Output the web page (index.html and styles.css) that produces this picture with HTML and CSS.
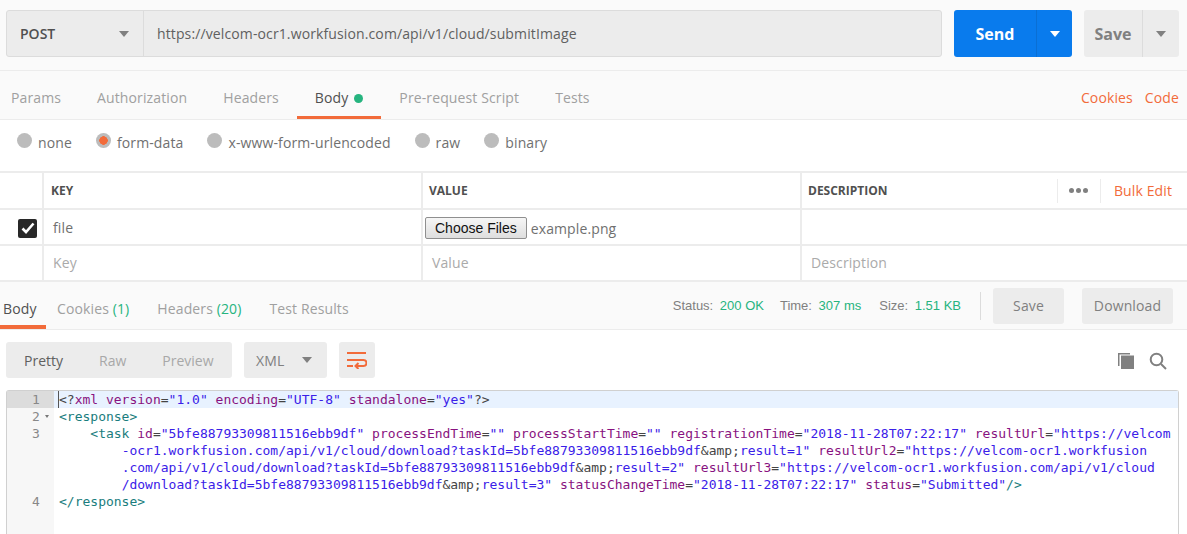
FILE: index.html
```html
<!DOCTYPE html>
<html lang="en">
<head>
<meta charset="utf-8">
<title>Postman</title>
<link rel="stylesheet" href="styles.css">
</head>
<body>
<section class="request-bar">
  <div class="url-group">
    <div class="method"><span>POST</span><i class="caret caret-grey"></i></div>
    <div class="url">https://velcom-ocr1.workfusion.com/api/v1/cloud/submitImage</div>
  </div>
  <div class="split send"><span class="split-main">Send</span><span class="split-arrow"><i class="caret caret-white"></i></span></div>
  <div class="split save"><span class="split-main">Save</span><span class="split-arrow"><i class="caret caret-grey"></i></span></div>
</section>
<nav class="req-tabs">
  <a class="req-tab tab-params">Params</a>
  <a class="req-tab">Authorization</a>
  <a class="req-tab">Headers</a>
  <a class="req-tab active">Body <i class="dot"></i></a>
  <a class="req-tab">Pre-request Script</a>
  <a class="req-tab">Tests</a>
  <span class="req-links"><a>Cookies</a><a>Code</a></span>
</nav>
<div class="body-types">
  <label class="radio"><i class="bullet"></i>none</label>
  <label class="radio"><i class="bullet on"></i>form-data</label>
  <label class="radio"><i class="bullet"></i>x-www-form-urlencoded</label>
  <label class="radio"><i class="bullet"></i>raw</label>
  <label class="radio"><i class="bullet"></i>binary</label>
</div>
<div class="kv">
  <div class="kv-row kv-head">
    <div class="cell check"></div>
    <div class="cell">KEY</div>
    <div class="cell">VALUE</div>
    <div class="cell head-desc"><span>DESCRIPTION</span><span class="head-tools"><span class="dots"><i></i><i></i><i></i></span><a class="bulk">Bulk Edit</a></span></div>
  </div>
  <div class="kv-row">
    <div class="cell check"><span class="checkbox"><svg width="14" height="12" viewBox="0 0 14 12"><path d="M1.5 6.5 5 10l7.5-8.5" fill="none" stroke="#fff" stroke-width="2.6"/></svg></span></div>
    <div class="cell text">file</div>
    <div class="cell file"><span class="choose">Choose Files</span><span>example.png</span></div>
    <div class="cell"></div>
  </div>
  <div class="kv-row">
    <div class="cell check"></div>
    <div class="cell text ph">Key</div>
    <div class="cell text ph">Value</div>
    <div class="cell text ph">Description</div>
  </div>
</div>
<section class="res-head">
  <a class="res-tab active">Body</a>
  <a class="res-tab">Cookies <b>(1)</b></a>
  <a class="res-tab">Headers <b>(20)</b></a>
  <a class="res-tab">Test Results</a>
  <div class="res-meta">
    <span class="meta-status">Status: <b>200 OK</b></span>
    <span class="meta-time">Time: <b>307 ms</b></span>
    <span>Size: <b>1.51 KB</b></span>
    <i class="meta-sep"></i>
    <a class="grey-btn btn-save">Save</a>
    <a class="grey-btn btn-dl">Download</a>
  </div>
</section>
<section class="toolbar">
  <div class="modes"><span class="mode current">Pretty</span><span class="mode">Raw</span><span class="mode">Preview</span></div>
  <div class="lang"><span>XML</span><i class="caret caret-grey"></i></div>
  <div class="wrap-btn"><svg width="20" height="18" viewBox="0 0 20 18" fill="none" stroke="#f26b3a" stroke-width="2"><path d="M0 2h19M0 9h16.500a2.700 2.700 0 0 1 0 6H9M0 15h6"/><path d="M11.500 12 8.500 15l3 3"/></svg></div>
  <div class="tool-icons">
    <svg width="18" height="18" viewBox="0 0 18 18"><path d="M1 1h12v1.500H2.500V14H1z" fill="#808080"/><rect x="4" y="3.500" width="13" height="13.500" fill="#808080"/></svg>
    <svg width="18" height="18" viewBox="0 0 18 18" fill="none" stroke="#808080" stroke-width="2"><circle cx="7.500" cy="7.500" r="5.800"/><path d="m12 12 5 5"/></svg>
  </div>
</section>
<section class="editor">
  <div class="gutter">
    <div class="ln ln-active">1</div>
    <div class="ln">2<i class="fold"></i></div>
    <div class="ln ln-tall">3</div>
    <div class="ln">4</div>
  </div>
  <pre class="code"><code class="line line-active"><span class="cursor"></span><span class="p">&lt;?</span><span class="a">xml</span> <span class="a">version</span><span class="p">=</span><span class="v">"1.0"</span> <span class="a">encoding</span><span class="p">=</span><span class="v">"UTF-8"</span> <span class="a">standalone</span><span class="p">=</span><span class="v">"yes"</span><span class="p">?&gt;</span></code><code class="line"><span class="t">&lt;response&gt;</span></code><code class="line">    <span class="t">&lt;task</span> <span class="a">id</span><span class="p">=</span><span class="v">"5bfe88793309811516ebb9df"</span> <span class="a">processEndTime</span><span class="p">=</span><span class="v">""</span> <span class="a">processStartTime</span><span class="p">=</span><span class="v">""</span> <span class="a">registrationTime</span><span class="p">=</span><span class="v">"2018-11-28T07:22:17"</span> <span class="a">resultUrl</span><span class="p">=</span><span class="v">"https://velcom</span></code><code class="line">        <span class="v">-ocr1.workfusion.com/api/v1/cloud/download?taskId=5bfe88793309811516ebb9df</span><span class="p">&amp;amp;</span><span class="v">result=1"</span> <span class="a">resultUrl2</span><span class="p">=</span><span class="v">"https://velcom-ocr1.workfusion</span></code><code class="line">        <span class="v">.com/api/v1/cloud/download?taskId=5bfe88793309811516ebb9df</span><span class="p">&amp;amp;</span><span class="v">result=2"</span> <span class="a">resultUrl3</span><span class="p">=</span><span class="v">"https://velcom-ocr1.workfusion.com/api/v1/cloud</span></code><code class="line">        <span class="v">/download?taskId=5bfe88793309811516ebb9df</span><span class="p">&amp;amp;</span><span class="v">result=3"</span> <span class="a">statusChangeTime</span><span class="p">=</span><span class="v">"2018-11-28T07:22:17"</span> <span class="a">status</span><span class="p">=</span><span class="v">"Submitted"</span><span class="t">/&gt;</span></code><code class="line"><span class="t">&lt;/response&gt;</span></code></pre>
</section>
</body>
</html>
```
FILE: styles.css
```css
* { box-sizing: border-box; }
html, body { margin: 0; height: 534px; overflow: hidden; }
body { background: #fff; color: #808080; font: 14px "Open Sans", sans-serif; letter-spacing: .12px; }
a, label { display: block; }
i { display: block; font-style: normal; }

.caret { width: 0; height: 0; border-style: solid; border-width: 6px 5px 0; border-color: transparent; }
.caret-grey { border-top-color: #808080; }
.caret-white { border-top-color: #fff; }

.request-bar { display: flex; height: 71px; padding: 10px 8px 0 6px; background: #fafafa; border-bottom: 1px solid #ececec; }
.url-group { display: flex; width: 936px; height: 47px; margin-right: 12px; background: #ececec; border: 1px solid #dcdcdc; border-radius: 3px; align-items: stretch; }
.method { display: flex; width: 137px; padding: 0 14px 0 13px; align-items: center; justify-content: space-between; border-right: 1px solid #dcdcdc; color: #505050; font-weight: 600; letter-spacing: 0; }
.url { padding-left: 13px; line-height: 45px; color: #606060; }
.split { display: flex; height: 47px; border-radius: 3px; font-size: 16px; font-weight: 700; letter-spacing: 0; align-items: stretch; }
.split-main { display: flex; align-items: center; justify-content: center; }
.split-arrow { display: flex; align-items: center; justify-content: center; }
.send { width: 118px; margin-right: 12px; background: #097bed; color: #fff; }
.send .split-main { width: 83px; border-right: 1px solid #0a6fd4; }
.send .split-arrow { flex: 1; }
.save { width: 95px; background: #ececec; color: #808080; }
.save .split-main { width: 59px; border-right: 1px solid #dcdcdc; }
.save .split-arrow { flex: 1; }

.req-tabs { display: flex; height: 49px; background: #fafafa; border-bottom: 1px solid #ececec; }
.req-tab { display: flex; height: 48px; padding: 4px 18px 0; gap: 6px; align-items: center; color: #a0a0a0; }
.tab-params { padding-left: 11px; }
.req-tab.active { padding-top: 7px; color: #505050; border-bottom: 3px solid #f26b3a; }
.dot { width: 9px; height: 9px; margin-top: 2px; border-radius: 50%; background: #26b47f; }
.req-links { display: flex; margin-left: auto; padding: 4px 8px 0 0; gap: 12px; align-items: center; color: #f26b3a; }

.body-types { display: flex; height: 51px; padding: 0 0 7px 17px; gap: 24px; align-items: center; color: #707070; }
.radio { display: flex; gap: 6px; align-items: center; }
.bullet { width: 15px; height: 15px; margin-top: -3px; border-radius: 50%; background: #bcbcbc; }
.bullet.on { background: radial-gradient(circle, #f26b3a 0 4px, #bcbcbc 4.500px); }

.kv { border-top: 2px solid #ececec; }
.kv-row { display: grid; grid-template-columns: 42px 379px 379px 1fr; height: 36px; border-bottom: 2px solid #ececec; }
.cell { display: flex; min-width: 0; padding-left: 7px; align-items: center; border-left: 2px solid #ececec; }
.cell.check { padding: 2px 0 0 18px; border-left: 0; }
.kv-head { height: 37px; font-size: 12px; font-weight: 700; letter-spacing: 0; color: #505050; }
.kv-head .cell + .cell + .cell { padding-left: 6px; }
.head-desc { justify-content: space-between; padding-right: 15px; }
.head-tools { display: flex; height: 24px; align-items: center; }
.dots { display: flex; height: 24px; width: 44px; gap: 2px; justify-content: center; align-items: center; border-left: 1px solid #ececec; border-right: 1px solid #ececec; }
.dots i { width: 5px; height: 5px; border-radius: 50%; background: #808080; }
.bulk { padding-left: 13px; color: #f26b3a; font-size: 14px; font-weight: 400; letter-spacing: .12px; }
.checkbox { display: flex; width: 19px; height: 19px; align-items: center; justify-content: center; border-radius: 2px; background: #282828; }
.text { padding-left: 9px; color: #707070; }
.ph { padding-bottom: 1px; color: #aaaaaa; }
.file { padding: 2px 0 0 2px; gap: 4px; color: #707070; }
.choose { height: 22px; padding: 0 9px; color: #111; font: 14px/20px "Liberation Sans", sans-serif; letter-spacing: 0; background: linear-gradient(#f6f6f6, #dedede); border: 1px solid #8f8f8f; border-radius: 2px; }

.res-head { display: flex; height: 48px; background: #fafafa; border-bottom: 1px solid #ececec; }
.res-tab { height: 47px; padding: 0 14px; line-height: 54px; color: #a0a0a0; }
.res-tab b { color: #26b47f; font-weight: 400; }
.res-tab.active { width: 46px; padding: 0 0 0 3px; margin-right: -3px; color: #505050; border-bottom: 4px solid #f26b3a; }
.res-meta { display: flex; margin-left: auto; padding-right: 14px; align-items: center; font: 13px "Liberation Sans", sans-serif; letter-spacing: 0; color: #808080; }
.res-meta span { margin-right: 19px; }
.res-meta .meta-status { margin-right: 16px; }
.res-meta .meta-time { margin-right: 18px; }
.res-meta b { margin-left: 3px; color: #26b47f; font-weight: 400; }
.meta-sep { width: 1px; height: 28px; margin-right: 12px; background: #dcdcdc; }
.grey-btn { height: 36px; text-align: center; border-radius: 3px; background: #ececec; color: #808080; font: 14px/36px "Open Sans", sans-serif; letter-spacing: .12px; }
.btn-save { width: 71px; margin-right: 18px; }
.btn-dl { width: 91px; }

.toolbar { display: flex; height: 60px; padding: 12px 20px 12px 6px; align-items: flex-start; }
.modes { display: flex; width: 226px; height: 36px; margin-right: 12px; padding-left: 18px; gap: 36px; align-items: center; border-radius: 3px; background: #ececec; color: #a8a8a8; letter-spacing: 0; }
.mode.current { color: #606060; }
.lang { display: flex; width: 83px; height: 36px; margin-right: 12px; padding: 0 15px 0 12px; align-items: center; justify-content: space-between; border-radius: 3px; background: #ececec; color: #808080; }
.wrap-btn { display: flex; width: 36px; height: 36px; align-items: center; justify-content: center; border-radius: 3px; background: #ececec; }
.tool-icons { display: flex; margin-left: auto; padding-top: 10px; gap: 14px; }

.editor { display: flex; width: 1173px; height: 145px; margin-left: 6px; border: 1px solid #d0d0d0; border-bottom: 0; border-radius: 3px 3px 0 0; }
.gutter { width: 47px; flex: none; background: #f7f7f7; color: #888; font: 13px/17px "DejaVu Sans Mono", monospace; letter-spacing: 0; }
.ln { position: relative; height: 17px; padding-left: 25px; }
.ln-active { background: #dcdcdc; }
.ln-tall { height: 68px; }
.fold { position: absolute; left: 38px; top: 7px; width: 0; height: 0; border-style: solid; border-width: 3px 2.500px 0; border-color: #777 transparent transparent; }
.code { flex: 1; margin: 0; font: 13px/17px "DejaVu Sans Mono", monospace; letter-spacing: 0; color: #333; overflow: hidden; }
.line { position: relative; display: block; height: 17px; padding-left: 5px; white-space: pre; }
.line-active { background: #e8f2ff; }
.cursor { position: absolute; left: 4px; top: 0; width: 1px; height: 17px; background: #555; }
.p { color: #444; }
.a { color: #881280; }
.v { color: #3a20e8; }
.t { color: #1a7d7d; }
```
